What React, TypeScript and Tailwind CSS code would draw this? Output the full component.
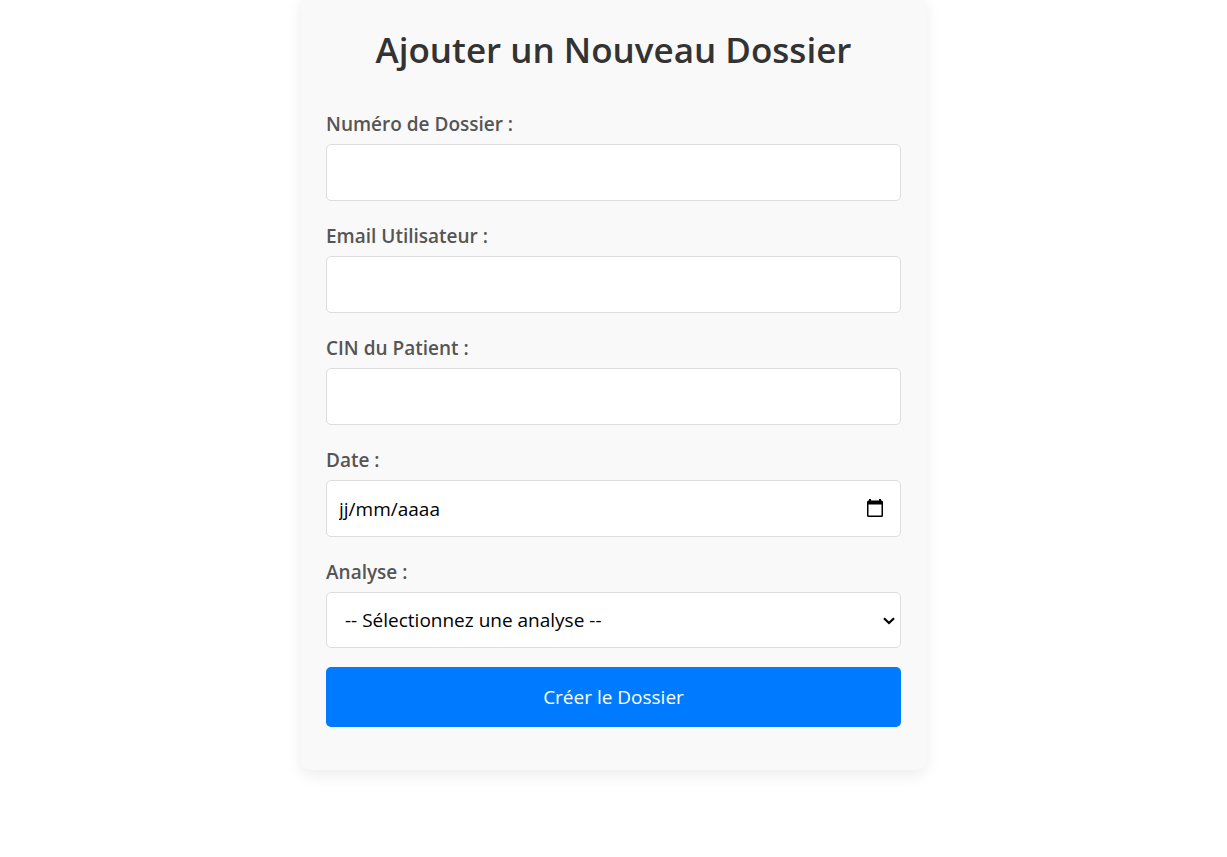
import { useState } from "react";
import type { FormEvent } from "react";

const labelClass = "mb-1.5 text-[19px] leading-7 font-semibold text-[#555555]";
const fieldClass =
  "h-[57px] w-full rounded-[5px] border border-[#dddddd] bg-white px-3 text-[19px] text-black placeholder:text-black placeholder:opacity-100";

const textFields = [
  { id: "numero", label: "Numéro de Dossier :", type: "text" },
  { id: "email", label: "Email Utilisateur :", type: "email" },
  { id: "cin", label: "CIN du Patient :", type: "text" },
];

function CalendarIcon() {
  return (
    <svg viewBox="0 0 18 20" className="h-5 w-[18px]" aria-hidden="true">
      <path
        fill="black"
        fillRule="evenodd"
        d="M3 0h2v1.500h8V0h2v1.500h.5A1.500 1.500 0 0 1 17 3v13.500a1.500 1.500 0 0 1-1.500 1.500h-13A1.500 1.500 0 0 1 1 16.500V3a1.500 1.500 0 0 1 1.500-1.500H3zM2.500 5.500V16.500h13V5.500z"
      />
    </svg>
  );
}

function ChevronIcon() {
  return (
    <svg
      viewBox="0 0 12 8"
      className="pointer-events-none absolute right-[6px] top-[25px] h-2 w-3"
      aria-hidden="true"
    >
      <path d="M1 1.200 6 6l5-4.800" fill="none" stroke="black" strokeWidth="2.200" />
    </svg>
  );
}

export default function App() {
  const [date, setDate] = useState("");
  const handleSubmit = (event: FormEvent) => event.preventDefault();

  return (
    <main className="flow-root min-h-screen overflow-hidden bg-white font-['Open_Sans','Noto_Sans',sans-serif]">
      <section className="mx-auto -mt-1.5 max-w-[625px] rounded-[10px] bg-[#f9f9f9] px-[25px] pt-[26px] pb-[43px] shadow-[0_5px_15px_rgba(0,0,0,0.08)]">
        <h1 className="mb-[30px] text-center text-[35px] leading-[60px] font-semibold text-[#333333]">
          Ajouter un Nouveau Dossier
        </h1>
        <form className="flex flex-col" onSubmit={handleSubmit}>
          {textFields.map((field) => (
            <div key={field.id} className="mb-[21px] flex flex-col">
              <label htmlFor={field.id} className={labelClass}>
                {field.label}
              </label>
              <input id={field.id} type={field.type} className={fieldClass} />
            </div>
          ))}
          <div className="mb-[21px] flex flex-col">
            <label htmlFor="date" className={labelClass}>
              Date :
            </label>
            <div className="relative">
              <input
                id="date"
                type="text"
                placeholder="jj/mm/aaaa"
                value={date}
                onChange={(event) => setDate(event.target.value)}
                className={fieldClass}
              />
              <button
                type="button"
                aria-label="Choisir une date"
                className="absolute inset-y-0 right-[17px] flex items-center"
              >
                <CalendarIcon />
              </button>
            </div>
          </div>
          <div className="mb-[19px] flex flex-col">
            <label htmlFor="analyse" className={labelClass}>
              Analyse :
            </label>
            <div className="relative">
              <select
                id="analyse"
                className="block h-14 w-full appearance-none rounded-[5px] border border-[#dddddd] bg-white pr-8 pl-[18px] text-[19px] text-black"
              >
                <option>-- Sélectionnez une analyse --</option>
              </select>
              <ChevronIcon />
            </div>
          </div>
          <button
            type="submit"
            className="h-[60px] cursor-pointer rounded-[5px] bg-[#007bff] text-[19px] text-white"
          >
            Créer le Dossier
          </button>
        </form>
      </section>
    </main>
  );
}
